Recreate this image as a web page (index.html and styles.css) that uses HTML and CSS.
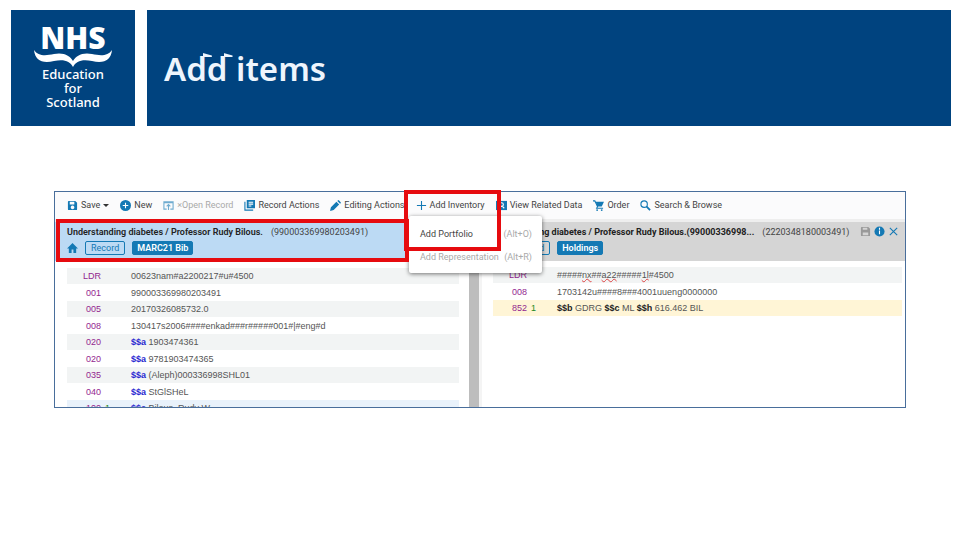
FILE: index.html
```html
<!DOCTYPE html>
<html lang="en">
<head>
<meta charset="utf-8">
<title>Add items</title>
<link rel="stylesheet" href="styles.css">
</head>
<body>
<header class="banner">
  <div class="logo">
    <strong class="logo-nhs">NHS</strong>
    <svg class="logo-book" viewBox="0 0 78 17" aria-hidden="true"><path d="M0 0C4 6 11 6 20 4C30 2 36 6 39 11C42 6 48 2 58 4C67 6 74 6 78 0C77 10 70 14 58 11C48 9 42 11 39 17C36 11 30 9 20 11C8 14 1 10 0 0Z"/></svg>
    <span class="logo-text">Education</span>
    <span class="logo-text">for</span>
    <span class="logo-text">Scotland</span>
  </div>
  <div class="title"><h1>A<span class="flag">d</span><span class="flag">d</span> items</h1></div>
</header>
<main class="editor">
  <div class="clip">
  <nav class="toolbar">
    <button><svg viewBox="0 0 12 12"><path fill-rule="evenodd" d="M2 1h7l2 2v7q0 1-1 1H2q-1 0-1-1V2q0-1 1-1ZM3 2v3h5V2ZM6 6a2 2 0 1 0 .1 0Z"/></svg>Save<i class="caret"></i></button>
    <button><svg viewBox="0 0 12 12"><circle cx="6" cy="6" r="6"/><path class="white" d="M6 3v6M3 6h6"/></svg>New</button>
    <button class="off" disabled><svg viewBox="0 0 12 12"><path class="line" d="M4 10H1V2h10v8H8M1 3h10M6 11V5M4 7l2-2 2 2"/></svg><span>×Open Record</span></button>
    <button><svg viewBox="0 0 12 12"><path d="M3 0h9v9H3Z"/><path class="line" d="M1 2v9h9"/><path class="white" d="M5 2.500h5M5 4.500h5M5 6.500h3"/></svg>Record Actions</button>
    <button><svg viewBox="0 0 12 12"><path d="M0 12l1-4 6-6 3 3-6 6ZM8 1l1-1q1 0 3 3l-1 1Z"/></svg>Editing Actions</button>
    <button><svg viewBox="0 0 12 12"><path class="line" d="M6 1v10M1 6h10"/></svg>Add Inventory</button>
    <button><svg viewBox="0 0 12 12"><path d="M0 1h12v10H0Z"/><circle class="white" cx="6" cy="5" r="2"/><path class="white" d="M7 7l2 2"/></svg>View Related Data</button>
    <button><svg viewBox="0 0 12 12"><path d="M3 2h9L9.500 7h-5Z"/><path class="line" d="M0 1h2l3 6-1 2h7"/><circle cx="4.500" cy="11" r="1"/><circle cx="9.500" cy="11" r="1"/></svg>Order</button>
    <button><svg viewBox="0 0 12 12"><circle class="line" cx="4.500" cy="4.500" r="3.500"/><path class="thick" d="M7 7l4 4"/></svg>Search &amp; Browse</button>
  </nav>
  <div class="panes">
    <section class="pane bib">
      <div class="head">
        <p class="name"><b>Understanding diabetes / Professor Rudy Bilous.</b><span>(990003369980203491)</span></p>
        <div class="tags"><svg viewBox="0 0 12 12"><path d="M6 0l6 6h-2v5H7V7H5v4H2V6H0Z"/></svg><button class="tag">Record</button><button class="tag solid">MARC21 Bib</button></div>
      </div>
      <table>
        <tr><th>LDR</th><td class="ind"></td><td>00623nam#a2200217#u#4500</td></tr>
        <tr><th>001</th><td class="ind"></td><td>990003369980203491</td></tr>
        <tr><th>005</th><td class="ind"></td><td>20170326085732.0</td></tr>
        <tr><th>008</th><td class="ind"></td><td>130417s2006####enkad###r#####001#|#eng#d</td></tr>
        <tr><th>020</th><td class="ind"></td><td><b>$$a</b> 1903474361</td></tr>
        <tr><th>020</th><td class="ind"></td><td><b>$$a</b> 9781903474365</td></tr>
        <tr><th>035</th><td class="ind"></td><td><b>$$a</b> (Aleph)000336998SHL01</td></tr>
        <tr><th>040</th><td class="ind"></td><td><b>$$a</b> StGlSHeL</td></tr>
        <tr class="tint"><th>100</th><td class="ind">1</td><td><b>$$a</b> Bilous, Rudy W.</td></tr>
      </table>
    </section>
    <div class="divider"></div>
    <section class="pane holdings">
      <div class="head">
        <p class="name"><b>Understanding diabetes / Professor Rudy Bilous.(99000336998...</b><span>(2220348180003491)</span>
          <span class="tools"><svg class="gray" viewBox="0 0 12 12"><path fill-rule="evenodd" d="M2 1h7l2 2v7q0 1-1 1H2q-1 0-1-1V2q0-1 1-1ZM3 2v2h5V2ZM3 7v3h6V7Z"/></svg><svg viewBox="0 0 12 12"><circle cx="6" cy="6" r="5.500"/><path class="white" d="M6 2v2M6 5v4"/></svg><svg viewBox="0 0 12 12"><path class="line" d="M2 2l8 8M10 2l-8 8"/></svg></span></p>
        <div class="tags"><svg viewBox="0 0 12 12"><path d="M6 0l6 6h-2v5H7V7H5v4H2V6H0Z"/></svg><button class="tag">Record</button><button class="tag solid">Holdings</button></div>
      </div>
      <table>
        <tr><th>LDR</th><td class="ind"></td><td>#####<u>nx</u>##<u>a22</u>#####<u>1l</u>#4500</td></tr>
        <tr><th>008</th><td class="ind"></td><td>1703142u####8###4001uueng0000000</td></tr>
        <tr class="current"><th>852</th><td class="ind">1</td><td><b>$$b</b> GDRG <b>$$c</b> ML <b>$$h</b> 616.462 BIL</td></tr>
      </table>
    </section>
  </div>
  </div>
  <div class="menu">
    <button>Add Portfolio<kbd>(Alt+O)</kbd></button>
    <button class="off" disabled>Add Representation<kbd>(Alt+R)</kbd></button>
  </div>
  <div class="mark mark-record"></div>
  <div class="mark mark-inventory"></div>
</main>
</body>
</html>
```
FILE: styles.css
```css
* { box-sizing: border-box; }
body { margin: 0; padding: 10px 9px 0 11px; background: #fff; font: 9px/12px Roboto, sans-serif; color: #444; }
button { border: 0; background: none; padding: 0; margin: 0; font: inherit; color: inherit; white-space: nowrap; }
svg { width: 11px; height: 11px; flex: none; fill: #1479b4; }
.line, .thick, .white { fill: none; stroke: #1479b4; stroke-width: 1.2; }
.thick { stroke-width: 2; }
.white { stroke: #fff; }

.banner { display: grid; grid-template-columns: 124px 1fr; gap: 12px; min-height: 116px; color: #fff; }
.logo, .title { background: #00437f; }
.logo { display: flex; flex-direction: column; align-items: center; padding-top: 12px; }
.logo-nhs { font: 800 30px/32px "Open Sans", sans-serif; }
.logo-book { width: 78px; height: 17px; fill: #fff; margin-top: -4px; }
.logo-text { font: 500 13px/14px "Noto Sans", sans-serif; }
.title { display: flex; align-items: center; padding: 0 17px; }
h1 { margin: 0; padding-top: 2px; font: 600 33px/48px "Noto Sans", sans-serif; color: #eef5fd; }
.flag { position: relative; }
.flag::after { content: ""; position: absolute; right: -5px; top: 7px; width: 9px; height: 4px; background: #eef5fd; clip-path: polygon(0 0, 100% 60%, 100% 100%, 0 100%); }

.editor { position: relative; margin: 65px 45px 0 43px; border: 1px solid #496e9b; }
.clip { height: 215px; overflow: hidden; display: flex; flex-direction: column; }
.toolbar { display: flex; align-items: center; gap: 11px; height: 30px; padding: 0 12px 1px; background: #fbfbfc; flex: none; border-bottom: 3px solid #eee; }
.toolbar button { display: flex; align-items: center; gap: 3px; }
.caret { border: 3px solid transparent; border-top-color: #333; border-bottom: 0; }
.off { color: #a9a9a9; }
.off svg { opacity: .6; }

.panes { display: flex; flex: 1; }
.pane { min-width: 0; }
.bib { flex: 414; }
.holdings { flex: 423; border-left: 3px solid #f4f4f4; }
.divider { width: 10px; background: #bdbdbd; }
.head { height: 39px; padding: 4px 12px; background: #bcdaf4; }
.holdings .head { background: #d5d5d5; padding: 4px 6px 4px 8px; }
.name { display: flex; gap: 8px; margin: 0; white-space: nowrap; }
.name b { color: #222; font-weight: 700; }
.bib .name b { font-weight: 600; }
.tools { display: flex; gap: 3px; margin-left: auto; }
.gray { fill: #999; }
.tags { display: flex; align-items: center; gap: 7px; margin-top: 3px; }
.holdings .tags { padding-left: 2px; }
.tag { height: 14px; padding: 0 5px; border: 1px solid #1479b4; border-radius: 2px; color: #1479b4; line-height: 12px; }
.solid { background: #1479b4; color: #fff; font-weight: 600; padding: 0 4px; }

table { border-collapse: collapse; margin: 7px 10px 0 12px; width: calc(100% - 22px); font: 9px/14px "Liberation Sans", Arial, sans-serif; color: #555; }
.holdings table { margin: 6px 3px 0 11px; width: calc(100% - 14px); }
tr { height: 16px; }
tr:nth-child(even) { height: 17px; }
tr:nth-child(odd) { background: #f2f4f4; }
th, td { padding: 0; text-align: left; font-weight: 400; white-space: nowrap; }
th { width: 34px; text-align: right; color: #93278f; }
.ind { width: 30px; padding-left: 4px; color: #238823; }
td b { color: #222; }
.bib td b { color: #2929d0; }
u { text-decoration: underline wavy #d44 1px; text-underline-offset: 0; }
tr.tint { background: #e9f2fb; }
tr.current { background: #fff5d6; }

.menu { position: absolute; left: 354px; top: 24px; width: 133px; height: 57px; background: #fff; border-radius: 2px; box-shadow: 0 1px 4px #0008; padding: 6px 10px 6px 11px; }
.menu button { display: flex; justify-content: space-between; align-items: center; width: 100%; height: 23px; }
kbd { font: inherit; color: #aaa; }
.mark { position: absolute; border: 4px solid #e60b0f; }
.mark-record { left: 1px; top: 27px; width: 353px; height: 43px; }
.mark-inventory { left: 349px; top: -2px; width: 97px; height: 61px; }
```
